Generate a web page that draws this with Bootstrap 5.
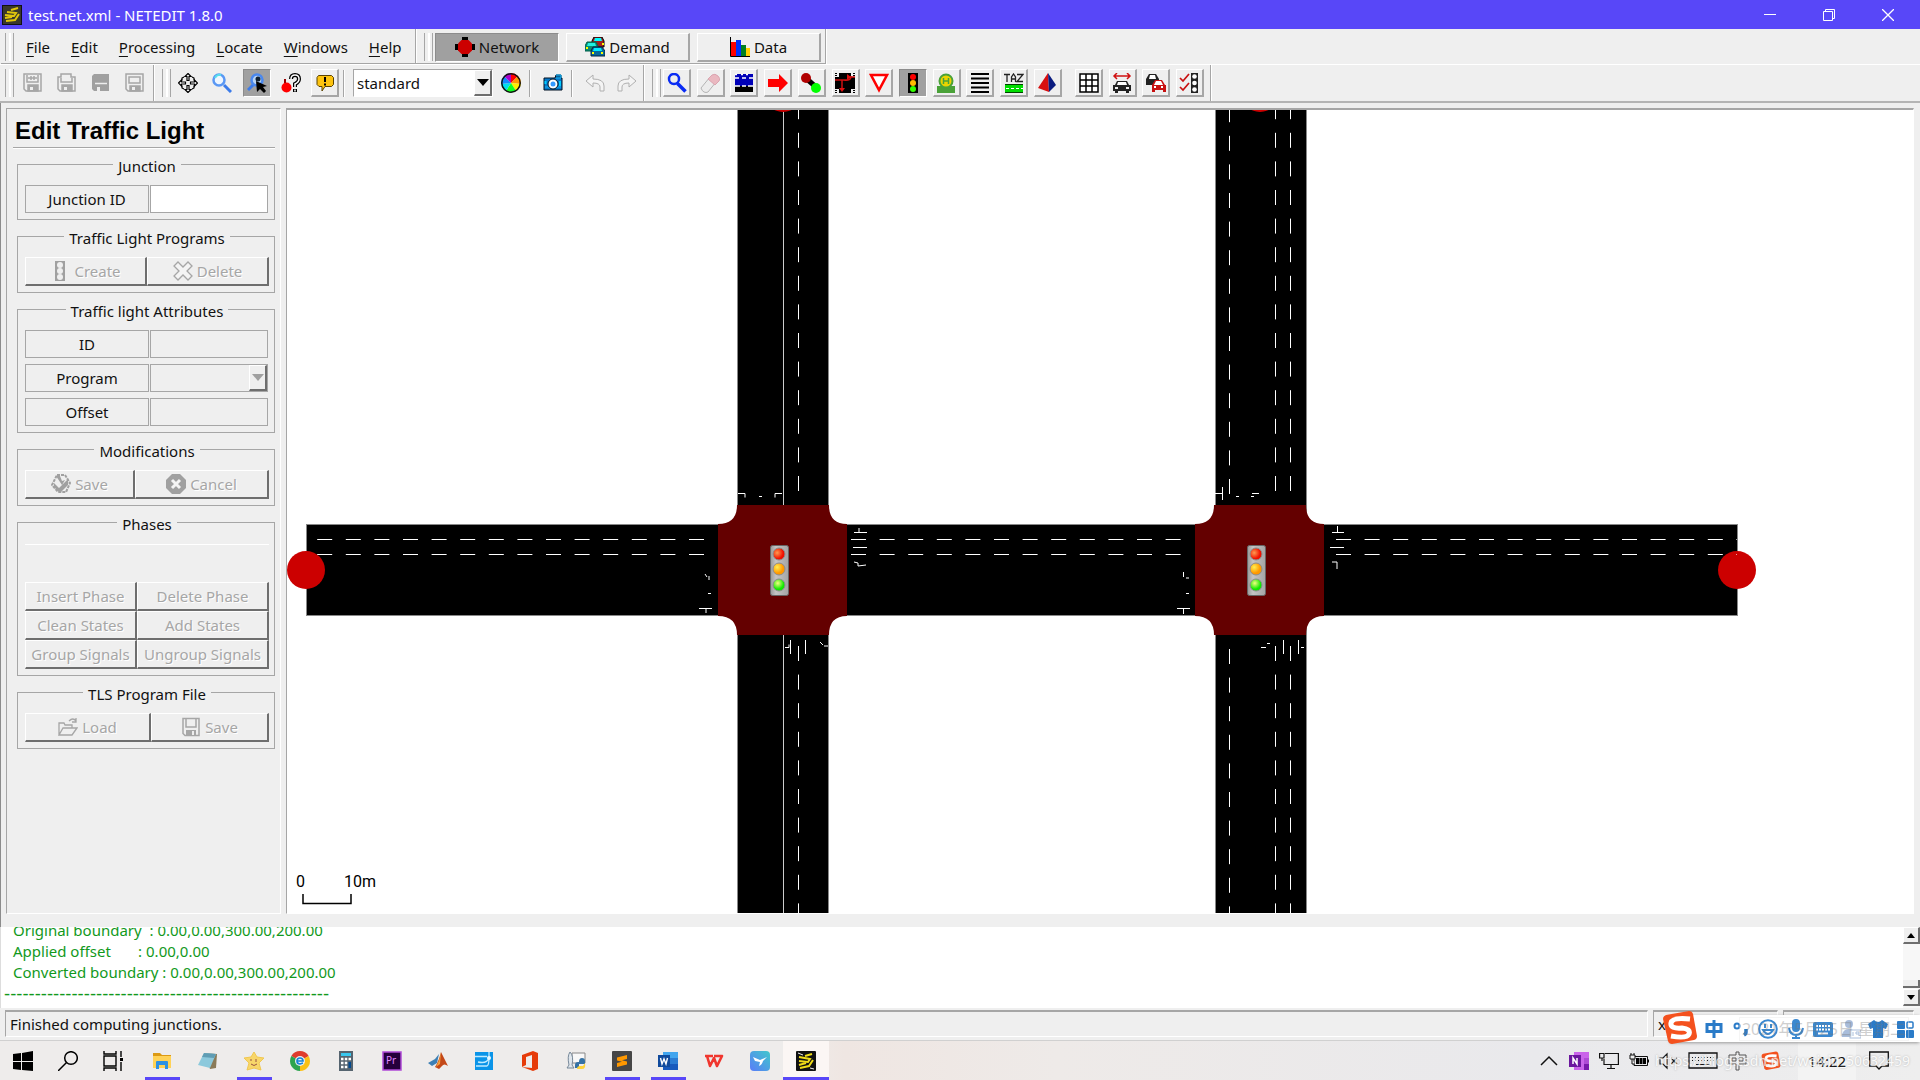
<!DOCTYPE html>
<html lang="en">
<head>
<meta charset="utf-8">
<meta name="viewport" content="width=device-width, initial-scale=1">
<title>test.net.xml - NETEDIT 1.8.0</title>
<link rel="stylesheet" href="https://cdn.jsdelivr.net/npm/bootstrap@5.3.0/dist/css/bootstrap.min.css">
<style>
:root{--face:#efefef;--dark:#a6a6a6;--deep:#6e6e6e;--accent:#5847f8}
body{height:100vh;background:var(--face);color:#111;font-family:"Noto Sans","Noto Sans CJK SC",sans-serif;font-size:15px;line-height:20px;overflow:hidden}
button,select,input{font:inherit;color:inherit;border-radius:0}
svg{display:block;flex:none}
.ic{width:20px;height:20px}
.titlebar{height:29px;background:var(--accent);color:#fff;padding:0 3px 0 2px}
.titlebar h1{font-size:15px;line-height:20px;font-weight:400;padding-left:2px}
.winbtn{width:59px;height:29px;background:none;border:0;padding:0;color:#fff}
.strip{height:36px;border-bottom:1px solid #fff;padding-left:1px}
.strip+.strip{height:38px;border-bottom:2px solid #b4b4b4}
.dock{height:100%;border-right:1px solid var(--dark);border-bottom:1px solid var(--dark);box-shadow:1px 0 #fff;padding:2px 0 0 4px}
.strip+.strip .dock{border-bottom:0;padding-top:0}
.grip{width:9px;height:28px;border:solid var(--dark);border-width:0 1px;position:relative;flex:none}
.grip::after{content:"";display:block;width:5px;height:28px;border-left:0;border-right:2px solid #fff}
.menus{gap:21px}
.modes{gap:7px;margin-left:2px}
.menuitem{color:#111;text-decoration:none}
.menuitem u{text-underline-offset:3px}
.mode{width:124px;height:29px;background:var(--face);border:1px solid #fff;border-right:2px solid var(--dark);border-bottom:2px solid var(--dark);padding:0}
.mode.on{background:#a0a0a0;border:1px solid #8c8c8c;border-right-color:#fff;border-bottom-color:#fff}
.tools-save{gap:6px;margin-left:5px}
.tools-view{width:165px;margin-left:3px}
.tools-edit{width:399px;margin-left:2px}
.tools-show{width:129px;margin-left:13px}
.tool{width:28px;height:28px;padding:0;border:1px solid transparent;background:var(--face);flex:none}
.tool.up{border-color:#fff var(--dark) var(--dark) #fff;border-right-width:2px;border-bottom-width:2px}
.tool.on{background:#a0a0a0;border-color:#8c8c8c #fff #fff #8c8c8c}
.rule{width:2px;height:27px;border-left:1px solid var(--dark);border-right:1px solid #fff;flex:none}
.combo{height:28px;border:1px solid var(--dark);border-right-color:#fff;border-bottom-color:#fff;background:#fff}
.combo select{appearance:none;border:0;background:transparent;padding:0 3px;outline:0;min-width:0}
.arrow{width:18px;background:var(--face);border:1px solid #fff;border-right:2px solid var(--deep);border-bottom:2px solid var(--deep)}
.work{padding:5px 6px 13px 5px;border-left:1px solid #8c8c8c;gap:5px;min-height:0}
.panel{width:275px;border:1px solid var(--dark);border-right:1px solid #fff;border-bottom:1px solid #fff;padding:5px 5px 0 6px;flex:none}
.panel h2{font:700 24px/28px "Liberation Sans",Arial,sans-serif;color:#000;margin:0 0 5px;padding:3px 0 2px 2px;border-bottom:1px solid var(--dark);box-shadow:0 1px #fff}
.grp{margin:0 0 5px 4px;border:1px solid var(--dark);padding:10px 5px 6px 7px}
.grp legend{float:none;width:auto;font-size:15px;line-height:18px;margin:0 auto;padding:4px 5px 0}
.cell{height:28px;border:1px solid var(--dark);width:124px}
.fieldbox{height:28px;border:1px solid var(--dark);width:118px;background:var(--face);padding:0 3px;min-width:0}
.stack{gap:6px}
.pair{gap:1px}
.pb{height:29px;background:var(--face);border:1px solid #fff;border-right:2px solid var(--deep);border-bottom:2px solid var(--deep);padding:0;color:#a6a6a6;text-shadow:1px 1px #fff;white-space:nowrap;flex:1 1 auto}
.pb:disabled{color:#a6a6a6}
.w1{width:122px;flex:none}.w2{width:110px;flex:none}.w3{width:126px;flex:none}
.phasegrid{display:grid;grid-template-columns:112px 1fr;margin-top:1px;padding-top:37px;border-top:1px solid #fff}
.view{border:1px solid var(--dark);border-top-width:2px;border-right-color:#fff;border-bottom-color:#fff;background:#fff;min-width:0;overflow:hidden}
.scalebar{font-family:Roboto,sans-serif;font-size:16px}
.logwrap{height:81px;border-left:1px solid #ddd;background:#fff;flex:none}
.log{color:#12991c;line-height:21px;padding:0 0 4px 12px;white-space:pre}
.log p{margin:0}
.log .dashes{font-family:"DejaVu Sans",sans-serif;font-size:17px;margin-left:-9px}
.vscroll{width:17px;background:#f7f7f7;flex:none;padding-bottom:2px}
.vscroll button{height:17px;padding:0;background:var(--face);border:1px solid #fff;border-right:2px solid var(--deep);border-bottom:2px solid var(--deep)}
.thumb{height:8px;margin-bottom:1px;background:var(--face);border-right:2px solid var(--deep);border-bottom:2px solid var(--deep)}
.status{height:33px;padding:2px 6px 3px 5px;gap:5px;border-bottom:1px solid #d0d0d0;position:relative;flex:none}
.sbox{border:1px solid var(--dark);border-top-width:2px;border-right-color:#fff;border-bottom-color:#fff;padding-left:4px}
.ime{position:absolute;right:0;top:7px;width:249px;height:27px;background:#fff;box-shadow:-1px 1px 3px #999;padding:0 1px 0 29px;z-index:2}
.ime button{width:27px;height:27px;padding:0;border:0;background:none;color:#2a7bc8}
.imelogo{position:absolute;left:-9px;top:-5px}
.tip{position:absolute;right:11px;top:2px;width:170px;height:24px;border:1px solid #e4e4e4;color:#777;opacity:.35;font-size:16px;line-height:22px;text-align:center;white-space:nowrap;pointer-events:none}
.taskbar{height:39px;background:linear-gradient(90deg,#eeeceb,#eeeceb 41%,#efe6e2 44%,#eeeae8 55%,#e9e9ec 80%,#eeeeee);position:relative;flex:none}
.taskbar button{border:0;padding:3px 0 0;background:none;height:39px;width:46px;border-bottom:3px solid transparent}
.taskbar .sys{width:45px}
.taskbar .run{background:linear-gradient(var(--accent),var(--accent)) center bottom/35px 3px no-repeat border-box}
.taskbar .cur{background:#fbf6f4;border-bottom-color:var(--accent)}
.taskbar .tray{width:30px}
.taskbar .wide{width:38px}
.taskbar .clock{width:58px;background:#f3f3f3}
.trayend{margin-right:18px}
.watermark{position:absolute;right:10px;top:10px;color:#fff;opacity:.75;font-size:14px;line-height:20px;text-shadow:0 0 2px #999;pointer-events:none}
</style>
<script src="https://cdn.jsdelivr.net/npm/bootstrap@5.3.0/dist/js/bootstrap.bundle.min.js"></script>
</head>
<body class="d-flex flex-column m-0">

<header class="titlebar d-flex align-items-center flex-shrink-0">
  <svg class="ic" viewBox="0 0 20 20"><rect width="20" height="20" fill="#111"/><rect x="1" y="1" width="18" height="18" fill="#39372c"/><path d="M9 5L16 3M5 7L14 8L12 11L3 10M4 16L13 15L17 9M3 13L10 12" stroke="#e2c60c" stroke-width="2" fill="none"/></svg>
  <h1 class="m-0 ms-1 me-auto">test.net.xml - NETEDIT 1.8.0</h1>
  <button class="winbtn d-flex align-items-center justify-content-center" aria-label="Minimize"><svg width="12" height="12"><path d="M0 5.500H12" stroke="#fff"/></svg></button>
  <button class="winbtn d-flex align-items-center justify-content-center" aria-label="Restore"><svg width="12" height="12" fill="none" stroke="#fff"><path d="M.5 2.500H9.500V11.500H.5ZM2.500 2.500V.5H11.500V9.500H9.500"/></svg></button>
  <button class="winbtn d-flex align-items-center justify-content-center" aria-label="Close"><svg width="12" height="12"><path d="M0 0L12 12M12 0L0 12" stroke="#fff" stroke-width="1.300"/></svg></button>
</header>

<div class="strip d-flex flex-shrink-0">
  <nav class="dock d-flex align-items-center" style="width:415px">
    <span class="grip"></span>
    <div class="menus d-flex ps-2 ms-1">
      <a class="menuitem" href="#"><u>F</u>ile</a><a class="menuitem" href="#"><u>E</u>dit</a><a class="menuitem" href="#"><u>P</u>rocessing</a><a class="menuitem" href="#"><u>L</u>ocate</a><a class="menuitem" href="#"><u>W</u>indows</a><a class="menuitem" href="#"><u>H</u>elp</a>
    </div>
  </nav>
  <div class="dock d-flex align-items-center pe-1">
    <span class="grip ms-1"></span>
    <div class="modes d-flex">
      <button class="mode on d-flex align-items-center justify-content-center gap-1"><svg class="ic" viewBox="0 0 20 20"><path d="M7 0h6v20H7zM0 7h20v6H0z"/><path d="M6.500 3h7L17 6.500v7L13.500 17h-7L3 13.500v-7z" fill="#c00"/></svg><span>Network</span></button>
      <button class="mode d-flex align-items-center justify-content-center gap-1"><svg class="ic" viewBox="0 0 20 20"><path d="M7 4l2-4h8l2 4v6H7z" fill="#a02020" stroke="#000"/><path d="M10 1h6l1 3H9z" fill="#0ff"/><path d="M0 9l2-4h9l2 4v5H0z" fill="#0a8a70" stroke="#00604c"/><path d="M3 6h7l1 3H2z" fill="#20f0e0"/><path d="M6 14l2-4h9l3 4v5H6z" fill="#086898" stroke="#024"/><path d="M9 11h7l1 3H8z" fill="#0ef"/><path d="M7 15h2v2H7zM16 15h2v2h-2zM1 10h2v2H1zM17 6h2v2h-2z" fill="#ff0"/></svg><span>Demand</span></button>
      <button class="mode d-flex align-items-center justify-content-center gap-1"><svg class="ic" viewBox="0 0 20 20"><path d="M.5 0V19.500H20" stroke="#000" fill="none"/><path d="M1 5h5v14H1z" fill="red"/><path d="M6 3h5v16H6z" fill="#0030ff"/><path d="M11 8h5v11h-5z" fill="#008020"/><path d="M16 11h4v8h-4z" fill="#ffd000"/></svg><span>Data</span></button>
    </div>
  </div>
</div>

<div class="strip d-flex flex-shrink-0">
  <div class="dock d-flex align-items-center" style="width:153px">
    <span class="grip"></span>
    <div class="tools-save d-flex">
      <button class="tool d-flex align-items-center justify-content-center" aria-label="Save network"><svg class="ic" viewBox="0 0 20 20" fill="none" stroke="#a6a6a6" stroke-width="1.500"><path d="M1 1h17v17H3l-2-2zM4 2v7h11V2M5 5h9M8 3v4M11 3v4"/><path d="M5 12h10v6H5z" fill="#a6a6a6"/><path d="M7 14h3v3H7z" fill="#eee" stroke="none"/></svg></button>
      <button class="tool d-flex align-items-center justify-content-center" aria-label="Save additionals"><svg class="ic" viewBox="0 0 20 20" fill="none" stroke="#a6a6a6" stroke-width="1.500"><path d="M1 4h3V1h10v3h4v14H3l-2-2zM4 5v4h11V5"/><path d="M5 12h10v6H5z" fill="#a6a6a6"/><path d="M7 14h3v3H7z" fill="#eee" stroke="none"/></svg></button>
      <button class="tool d-flex align-items-center justify-content-center" aria-label="Save demand"><svg class="ic" viewBox="0 0 20 20"><path d="M1 3l2-2h15v17H3l-2-2z" fill="#a0a0a0"/><path d="M4 10.500h12" stroke="#eee" stroke-width="1.500"/><path d="M6 14h3v4H6z" fill="#eee"/></svg></button>
      <button class="tool d-flex align-items-center justify-content-center" aria-label="Save data"><svg class="ic" viewBox="0 0 20 20" fill="none" stroke="#a6a6a6" stroke-width="1.500"><path d="M1 1h17v17H3l-2-2zM4 4h11v6H4z"/><path d="M5 13h10v5H5z" fill="#a6a6a6"/><path d="M7 14h3v3H7z" fill="#eee" stroke="none"/></svg></button>
    </div>
  </div>
  <div class="dock d-flex align-items-center" style="width:490px">
    <span class="grip ms-1"></span>
    <div class="tools-view d-flex justify-content-between">
      <button class="tool d-flex align-items-center justify-content-center" aria-label="Recenter view"><svg class="ic" viewBox="0 0 20 20" fill="#fff" stroke="#000" stroke-width="1.200"><path id="mv" d="M10 .5l3 3h-2v4H9v-4H7z"/><use href="#mv" transform="rotate(90 10 10)"/><use href="#mv" transform="rotate(180 10 10)"/><use href="#mv" transform="rotate(270 10 10)"/><path d="M4 7.500V5l2-1M16 7.500V5l-2-1M4 12.500V15l2 1M16 12.500V15l-2 1" fill="none"/></svg></button>
      <button class="tool d-flex align-items-center justify-content-center" aria-label="Zoom"><svg class="ic" viewBox="0 0 20 20"><path d="M12 12l7 7" stroke="#3b7bea" stroke-width="3"/><circle cx="7" cy="7" r="5.500" fill="#eef6ff" stroke="#5a98f4" stroke-width="2.500"/><path d="M3 5a5 5 0 0 1 6-3" stroke="#58e0ec" stroke-width="2" fill="none"/></svg></button>
      <button class="tool on d-flex align-items-center justify-content-center" aria-label="Zoom style"><svg class="ic" viewBox="0 0 20 20"><path d="M7 11l-6 6" stroke="#3b7bea" stroke-width="3"/><circle cx="10" cy="7" r="5.500" fill="#b8d4f4" stroke="#4a88ee" stroke-width="2.500"/><circle cx="11" cy="6" r="2.500" fill="#123"/><path d="M9 8l11 5-4 1 3 4-2 2-4-4-3 3z" fill="#000"/></svg></button>
      <button class="tool d-flex align-items-center justify-content-center" aria-label="Locate junction"><svg class="ic" viewBox="0 0 20 20"><circle cx="5.500" cy="14.500" r="5" fill="red"/><path d="M4 10V6" stroke="#900" stroke-width="2"/><path d="M10 6q0-4 4-4t4 4q0 3-4 5v3M14 16v3" fill="none" stroke="#000" stroke-width="4"/><path d="M10 6q0-4 4-4t4 4q0 3-4 5v3M14 16.500v2" fill="none" stroke="#fff" stroke-width="1.500"/></svg></button>
      <button class="tool up d-flex align-items-center justify-content-center" aria-label="Messages"><svg class="ic" viewBox="0 0 20 20"><path d="M3.500 2.500h13l2 2v7l-2 2H10l-3 4.500v-4.500H4l-2-2v-7z" fill="#fdc30f" stroke="#5a4200"/><path d="M10 4v5M10 10.500v2" stroke="#000" stroke-width="2"/></svg></button>
    </div>
    <span class="rule mx-1"></span>
    <div class="combo d-flex ms-1 bg-white" style="width:140px"><select class="flex-grow-1" aria-label="View scheme"><option>standard</option></select><span class="arrow d-flex align-items-center justify-content-center"><svg width="12" height="7"><path d="M0 0h12L6 7z"/></svg></span></div>
    <button class="tool d-flex align-items-center justify-content-center ms-1" aria-label="Colours"><svg class="ic" viewBox="0 0 20 20"><g stroke="none"><path d="M10 10V0a10 10 0 0 1 7 3z" fill="#f00"/><path d="M10 10l7-7a10 10 0 0 1 3 8z" fill="#f90"/><path d="M10 10l10 1a10 10 0 0 1-5 7z" fill="#fe0"/><path d="M10 10l5 8a10 10 0 0 1-10 0z" fill="#1f2"/><path d="M10 10l-5 8a10 10 0 0 1-5-7z" fill="#0de"/><path d="M10 10L0 11a10 10 0 0 1 3-8z" fill="#18f"/><path d="M10 10L3 3a10 10 0 0 1 7-3z" fill="#a0c"/></g><circle cx="10" cy="10" r="9.200" fill="none" stroke="#111" stroke-width="1.500"/></svg></button>
    <span class="rule mx-1"></span>
    <button class="tool d-flex align-items-center justify-content-center ms-1" aria-label="Snapshot"><svg class="ic" viewBox="0 0 20 20"><path d="M1 5h11l1-3h5v3h1v12H1z" fill="#0878c8" stroke="#012"/><path d="M13 2h5v3h-5M2 14h16" stroke="#13b3f4" fill="#086098"/><circle cx="10" cy="11" r="5" fill="#fff" stroke="#012"/><circle cx="10" cy="11" r="2.500" fill="#39f"/><path d="M2.500 8v3M17 8v5" stroke="#0cf" stroke-width="2"/></svg></button>
    <span class="rule mx-1"></span>
    <button class="tool d-flex align-items-center justify-content-center ms-1" aria-label="Undo"><svg class="ic" viewBox="0 0 20 20" fill="#f4f4f4" stroke="#b0b0b0"><path d="M1 8l7-6v4q11 0 11 7v5h-4v-4q0-4-7-4v4z"/></svg></button>
    <button class="tool d-flex align-items-center justify-content-center ms-1" aria-label="Redo"><svg class="ic" viewBox="0 0 20 20" fill="#f4f4f4" stroke="#b0b0b0"><path d="M19 8l-7-6v4Q1 6 1 13v5h4v-4q0-4 7-4v4z"/></svg></button>
  </div>
  <div class="dock d-flex align-items-center" style="width:567px">
    <span class="grip ms-1"></span>
    <div class="tools-edit d-flex justify-content-between">
      <button class="tool up d-flex align-items-center justify-content-center" aria-label="Inspect"><svg class="ic" viewBox="0 0 20 20" fill="none" stroke="#0a2cf4"><circle cx="7" cy="6" r="5" stroke-width="2.500"/><path d="M10.500 10.500l8 8" stroke-width="3.500"/></svg></button>
      <button class="tool up d-flex align-items-center justify-content-center" aria-label="Delete"><svg class="ic" viewBox="0 0 20 20"><path d="M1 15L10 4l6 5-8 10q-2 1-4 0t-3-4z" fill="#ececec" stroke="#b4b4b4"/><path d="M8 6l4-4q3-2 6 1t1 5l-4 4z" fill="#eab8c0" stroke="#daa4b0"/></svg></button>
      <button class="tool up d-flex align-items-center justify-content-center" aria-label="Edge"><svg class="ic" viewBox="0 0 20 20"><path d="M1 1h18v12H1z" fill="#0000b8"/><path d="M1 13h18v6H1z"/><path d="M1 1.500h2M7 1.500h2M12 1.500h2M1 5h4M8 5h4M15 5h4M1 13h5M8 13h4M14 13h5" stroke="#fff" stroke-width="1.500"/></svg></button>
      <button class="tool up d-flex align-items-center justify-content-center" aria-label="Move"><svg class="ic" viewBox="0 0 20 20"><path d="M0 6h11V1l9 9-9 9v-5H0z" fill="red"/></svg></button>
      <button class="tool up d-flex align-items-center justify-content-center" aria-label="Connect"><svg class="ic" viewBox="0 0 20 20"><path d="M7 7l8 7" stroke="#000" stroke-width="5"/><circle cx="5" cy="5" r="5" fill="#b00000"/><circle cx="15" cy="15" r="5" fill="#0f0"/></svg></button>
      <button class="tool up d-flex align-items-center justify-content-center" aria-label="Connection"><svg class="ic" viewBox="0 0 20 20"><path d="M4 0h12v20H4zM0 4h20v12H0z"/><path d="M1 0v3M19 0v3M1 17v3M19 17v3" stroke="#000" stroke-width="2" stroke-dasharray="1 1"/><path d="M7 17V7H0M7 7h6M9 7q7 1 7-4M12 4h8" stroke="#d01010" stroke-width="1.500" fill="none"/><path d="M4 15h6l-3 4zM12 1l4 3-4 3z" fill="#e01010"/></svg></button>
      <button class="tool up d-flex align-items-center justify-content-center" aria-label="Prohibition"><svg class="ic" viewBox="0 0 20 20"><path d="M2 2h16l-8 15z" fill="#fff" stroke="red" stroke-width="2.500"/></svg></button>
      <button class="tool on d-flex align-items-center justify-content-center" aria-label="Traffic light"><svg class="ic" viewBox="0 0 20 20"><path d="M5 0h10v20H5z"/><circle cx="10" cy="4" r="3" fill="red"/><circle cx="10" cy="10" r="3" fill="#fb0"/><circle cx="10" cy="16" r="3" fill="#3f0"/></svg></button>
      <button class="tool up d-flex align-items-center justify-content-center" aria-label="Additional"><svg class="ic" viewBox="0 0 20 20"><path d="M1 13h18v7H1z" fill="#4aa238"/><circle cx="10" cy="8" r="6.500" fill="#ecd400" stroke="#4aa238" stroke-width="2"/><path d="M7.500 5v6M12.500 5v6M7.500 8h5" stroke="#4aa238" stroke-width="1.500"/></svg></button>
      <button class="tool up d-flex align-items-center justify-content-center" aria-label="Crossing"><svg class="ic" viewBox="0 0 20 20"><path d="M1 1h18M1 5.500h18M1 10h18M1 14.500h18M1 19h18" stroke="#000" stroke-width="2"/></svg></button>
      <button class="tool up d-flex align-items-center justify-content-center" aria-label="TAZ"><svg class="ic" viewBox="0 0 20 20"><path d="M0 1.500h6M3 1v8M7.500 9V4l2-3 2 3v5M7 6h4M13 1.500h6l-6 7h6" stroke="#222" stroke-width="1.300" fill="none"/><path d="M1 11h18v9H1z" fill="#0d0"/><path d="M1 11.500h18M1 19.500h18" stroke="#040"/><path d="M2 15.500h17" stroke="#fff" stroke-dasharray="3 2"/></svg></button>
      <button class="tool up d-flex align-items-center justify-content-center" aria-label="Polygon"><svg class="ic" viewBox="0 0 20 20"><path d="M11 0L1 15l11 4z" fill="#d81010"/><path d="M11 0l8 12-7 7z" fill="#0a1c80"/></svg></button>
    </div>
    <div class="tools-show d-flex justify-content-between">
      <button class="tool up d-flex align-items-center justify-content-center" aria-label="Grid"><svg class="ic" viewBox="0 0 20 20"><path d="M1 1h18v18H1zM7 1v18M13 1v18M1 7h18M1 13h18" fill="#fff" stroke="#000" stroke-width="1.500"/></svg></button>
      <button class="tool up d-flex align-items-center justify-content-center" aria-label="Spread vehicles"><svg class="ic" viewBox="0 0 20 20"><path d="M2 3h16M5 0L2 3l3 3M15 0l3 3-3 3" stroke="#d01010" stroke-width="1.500" fill="none"/><path d="M1 12h2l2-4h10l2 4h2v6h-2v2h-3v-2H6v2H3v-2H1z" fill="#222"/><path d="M6 9h8l1 3H5z" fill="#fff"/><path d="M3 14h3v2H3zM14 14h3v2h-3z" fill="#eee"/></svg></button>
      <button class="tool up d-flex align-items-center justify-content-center" aria-label="Show demand"><svg class="ic" viewBox="0 0 20 20"><path d="M0 6l3-5h7l3 5v6H0z" fill="#222"/><path d="M4 2h5l1 4H3z" fill="#fff"/><path d="M6 12l3-5h7l3 5h1v7h-3v-2H9v2H6z" fill="#c81010"/><path d="M10 8h5l2 4H8z" fill="#fff"/><path d="M8 14h2M15 14h2" stroke="#fff" stroke-width="2"/></svg></button>
      <button class="tool up d-flex align-items-center justify-content-center" aria-label="Check phases"><svg class="ic" viewBox="0 0 20 20"><path d="M1 5l3 3 6-7M1 14l3 3 6-7" stroke="#c81010" stroke-width="1.700" fill="none"/><path d="M12 0h7v20h-7z" fill="#222"/><g fill="#fff"><circle cx="15.500" cy="3.500" r="2.300"/><circle cx="15.500" cy="10" r="2.300"/><circle cx="15.500" cy="16.500" r="2.300"/></g></svg></button>
    </div>
  </div>
</div>

<main class="work d-flex flex-grow-1">
  <aside class="panel">
    <h2>Edit Traffic Light</h2>
    <fieldset class="grp"><legend>Junction</legend>
      <div class="d-flex pair"><label class="cell d-flex align-items-center justify-content-center" for="jid">Junction ID</label><input class="fieldbox bg-white" id="jid" type="text"></div>
    </fieldset>
    <fieldset class="grp"><legend>Traffic Light Programs</legend>
      <div class="d-flex">
        <button class="pb w1 d-flex align-items-center justify-content-center gap-1" disabled><svg class="ic" viewBox="0 0 20 20"><path d="M5 0h10v20H5z" fill="#a0a0a0"/><g fill="#efefef"><circle cx="10" cy="4" r="3"/><circle cx="10" cy="10" r="3"/><circle cx="10" cy="16" r="3"/></g></svg>Create</button>
        <button class="pb d-flex align-items-center justify-content-center gap-1" disabled><svg class="ic" viewBox="0 0 20 20" fill="#f4f4f4" stroke="#a6a6a6" stroke-width="1.300"><path d="M5 1l5 5 5-5 4 4-5 5 5 5-4 4-5-5-5 5-4-4 5-5-5-5z"/></svg>Delete</button>
      </div>
    </fieldset>
    <fieldset class="grp"><legend>Traffic light Attributes</legend>
      <div class="d-flex flex-column stack">
        <div class="d-flex pair"><label class="cell d-flex align-items-center justify-content-center" for="tid">ID</label><input class="fieldbox" id="tid" type="text" disabled></div>
        <div class="d-flex pair"><label class="cell d-flex align-items-center justify-content-center" for="tprog">Program</label><div class="fieldbox combo d-flex p-0"><select class="flex-grow-1" id="tprog" disabled><option></option></select><span class="arrow d-flex align-items-center justify-content-center"><svg width="12" height="7"><path d="M0 0h12L6 7z" fill="#a0a0a0"/></svg></span></div></div>
        <div class="d-flex pair"><label class="cell d-flex align-items-center justify-content-center" for="toff">Offset</label><input class="fieldbox" id="toff" type="text" disabled></div>
      </div>
    </fieldset>
    <fieldset class="grp"><legend>Modifications</legend>
      <div class="d-flex">
        <button class="pb w2 d-flex align-items-center justify-content-center gap-1" disabled><svg class="ic" viewBox="0 0 20 20"><path d="M6 1h8l5 8-4 9H7l-6-7z" fill="none" stroke="#a0a0a0" stroke-width="2" stroke-dasharray="3 1"/><path d="M5 2h4l2 5 3-1-3 5zM3 9l5 5 9-9v6l-8 8-6-6z" fill="#a0a0a0"/></svg>Save</button>
        <button class="pb d-flex align-items-center justify-content-center gap-1" disabled><svg class="ic" viewBox="0 0 20 20"><path d="M6 0h8l6 6v8l-6 6H6l-6-6V6z" fill="#a0a0a0"/><path d="M6 6l8 8M14 6l-8 8" stroke="#f4f4f4" stroke-width="3"/></svg>Cancel</button>
      </div>
    </fieldset>
    <fieldset class="grp"><legend>Phases</legend>
      <div class="phasegrid">
        <button class="pb" disabled>Insert Phase</button><button class="pb" disabled>Delete Phase</button>
        <button class="pb" disabled>Clean States</button><button class="pb" disabled>Add States</button>
        <button class="pb" disabled>Group Signals</button><button class="pb" disabled>Ungroup Signals</button>
      </div>
    </fieldset>
    <fieldset class="grp"><legend>TLS Program File</legend>
      <div class="d-flex">
        <button class="pb w3 d-flex align-items-center justify-content-center gap-1" disabled><svg class="ic" viewBox="0 0 20 20" fill="none" stroke="#a6a6a6" stroke-width="1.300"><path d="M1 18V6h5l1 2h7v3M1 18l4-7h14l-5 7zM11 4q4-4 7 0M18 1v4h-4"/></svg>Load</button>
        <button class="pb d-flex align-items-center justify-content-center gap-1" disabled><svg class="ic" viewBox="0 0 20 20"><path d="M2 1.500h16v17H4l-2-2zM5 2v8h10V2" fill="none" stroke="#a6a6a6" stroke-width="1.500"/><path d="M5 13h10v6H5z" fill="#a6a6a6"/><path d="M11 14h2v4h-2z" fill="#eee"/></svg>Save</button>
      </div>
    </fieldset>
  </aside>

  <section class="view flex-grow-1" aria-label="Network view">
    <svg width="100%" height="100%">
      <defs>
        <path id="junction" d="M737 505H829Q829 524 847 524V616Q829 616 829 635H737Q737 616 718 616V524Q737 524 737 505Z" fill="#640000"/>
        <linearGradient id="case"><stop offset="0" stop-color="#999"/><stop offset=".3" stop-color="#c4c4c4"/><stop offset="1" stop-color="#a4a4a4"/></linearGradient>
        <radialGradient id="lr" cx=".35" cy=".4"><stop offset="0" stop-color="#ff9a50"/><stop offset="1" stop-color="#f01000"/></radialGradient>
        <radialGradient id="ly" cx=".35" cy=".35"><stop offset="0" stop-color="#ffef50"/><stop offset="1" stop-color="#ff9800"/></radialGradient>
        <radialGradient id="lg" cx=".4" cy=".35"><stop offset="0" stop-color="#f2ff80"/><stop offset="1" stop-color="#10e800"/></radialGradient>
        <g id="signal"><rect x="770.500" y="545.500" width="18" height="50" rx="2" fill="url(#case)" stroke="#666"/><g stroke="#8c8c8c"><circle cx="779" cy="554" r="6" fill="url(#lr)"/><circle cx="779" cy="569" r="6" fill="url(#ly)"/><circle cx="779" cy="585" r="6" fill="url(#lg)"/></g></g>
      </defs>
      <g transform="translate(-287 -110)">
        <g stroke="#888"><rect x="737.500" y="90.500" width="91" height="900"/><rect x="1215.500" y="90.500" width="91" height="900"/><rect x="306.500" y="524.500" width="1431" height="91"/></g>
        <g fill="#c00"><circle cx="306" cy="570" r="19"/><circle cx="1737" cy="570" r="19"/><circle cx="783" cy="93" r="19"/><circle cx="1260" cy="93" r="19"/></g>
        <g stroke="#ddd" fill="none">
          <path d="M783.500 112V505M783.500 635V920" stroke="#ccc"/>
          <g stroke-dasharray="15 13.600" stroke="#fff">
            <path d="M704 539.500H310M704 554.500H310M851 539.500H1183M851 554.500H1183M1336 539.500H1737M1336 554.500H1737"/>
            <path d="M798.500 491V110M1229.500 494V110M1275.500 491V110M1290.500 491V110M798.500 646V920M1229.500 649V920M1275.500 646V920M1290.500 646V920"/>
          </g>
          <g stroke="#fff">
            <path d="M738 493.500h7v4M782 493.500h-7v4M759 496.500h3M854 532.500h13M859 528v4M853 547.500h14M854 562l4 1v3l8-1M705 574l2 3M709 576v4M708 593.500h3M699 608.500h13M706 609v4M785 647.500h4v-3M790.500 640v14M805.500 640v14M820 642l3 3M824 646h4"/>
            <path d="M1222.500 487v13M1215 493.500h7M1236 496.500h3M1251 496.500h3M1252 493.500h7M1332 532.500h12M1337.500 526v6M1330 547.500h14M1332 562h5v7M1183.500 572v5M1186 578h3M1186 593.500h3M1177 608.500h13M1183.500 609v5M1261 647.500h5M1267 643.500h3M1283.500 640v14M1298.500 640v14M1301 647.500h3"/>
          </g>
        </g>
        <use href="#junction"/><use href="#junction" x="477"/>
        <use href="#signal"/><use href="#signal" x="477"/>
        <path d="M303 894v9.500h48V894" fill="none" stroke="#000" stroke-width="1.500"/>
        <g class="scalebar"><text x="296" y="887">0</text><text x="344" y="887">10m</text></g>
      </g>
    </svg>
  </section>
</main>

<section class="logwrap d-flex">
  <div class="log flex-grow-1 d-flex flex-column justify-content-end overflow-hidden"><p>Original boundary  : 0.00,0.00,300.00,200.00</p><p>Applied offset       : 0.00,0.00</p><p>Converted boundary : 0.00,0.00,300.00,200.00</p><p class="dashes">-----------------------------------------------------</p></div>
  <div class="vscroll d-flex flex-column">
    <button class="d-flex align-items-center justify-content-center" aria-label="Scroll up"><svg width="8" height="5"><path d="M0 5h8L4 0z"/></svg></button>
    <div class="flex-grow-1"></div><div class="thumb"></div>
    <button class="d-flex align-items-center justify-content-center" aria-label="Scroll down"><svg width="8" height="5"><path d="M0 0h8L4 5z"/></svg></button>
  </div>
</section>

<footer class="status d-flex">
  <div class="sbox flex-grow-1 d-flex align-items-center">Finished computing junctions.</div>
  <div class="sbox d-flex align-items-center" style="width:125px">x</div>
  <div class="sbox" style="width:131px"></div>
  <div class="ime d-flex align-items-center justify-content-between">
    <svg class="imelogo" width="36" height="36" viewBox="0 0 36 36"><path d="M4 5L27 1q3 0 4 3l4 22q0 3-3 4L10 34q-3 0-4-3L1 9q0-3 3-4z" fill="#f4511e"/><path d="M28 9Q10 7 9 13t11 5q9 1 7 6T9 26" fill="none" stroke="#fff" stroke-width="5"/></svg>
    <button aria-label="Chinese mode"><svg class="ic mx-auto" viewBox="0 0 20 20" fill="none" stroke="#2a7bc8" stroke-width="3"><path d="M3 5.500h14v7H3zM10 1v18"/></svg></button>
    <button aria-label="Punctuation"><svg class="ic mx-auto" viewBox="0 0 20 20" fill="none" stroke="#2a7bc8" stroke-width="2"><circle cx="6" cy="7" r="2.500"/><path d="M15 10v3q0 2-2 3" stroke-width="3.500"/></svg></button>
    <button aria-label="Emoji"><svg class="ic mx-auto" viewBox="0 0 20 20" fill="none" stroke="#3a88d0" stroke-width="2"><circle cx="10" cy="10" r="8.800"/><path d="M7 5v4M13 5v4M5 11q5 8 10 0z"/></svg></button>
    <button aria-label="Voice"><svg class="ic mx-auto" viewBox="0 0 20 20" fill="none" stroke="#3a88d0" stroke-width="2"><rect x="7" y="1" width="6" height="11" rx="3" fill="#3a88d0"/><path d="M3 9q1 7 7 7t7-7M10 16v3M6 19h8"/></svg></button>
    <button aria-label="Keyboard"><svg class="ic mx-auto" viewBox="0 0 20 20"><rect x="0" y="3" width="20" height="15" rx="2" fill="#3a88d0"/><path d="M3 7h15M3 10.500h15" stroke="#fff" stroke-width="2" stroke-dasharray="2 1"/><path d="M5 14.500h10" stroke="#fff" stroke-width="2"/></svg></button>
    <button aria-label="Account"><svg class="ic mx-auto" viewBox="0 0 20 20" fill="#a9bddb"><circle cx="8" cy="5" r="4"/><path d="M1 18q0-8 7-8t7 8z"/><rect x="9" y="11" width="11" height="8" fill="#fff" stroke="#a9bddb"/><path d="M12 13v4M15 13h3v4M15 13v2h3" stroke="#a9bddb" fill="none"/></svg></button>
    <button aria-label="Skin"><svg class="ic mx-auto" viewBox="0 0 20 20"><path d="M6 1q4 4 8 0l6 4-2 5-3-1v10H5V9l-3 1-2-5z" fill="#2a7bc8"/></svg></button>
    <button aria-label="Toolbox"><svg class="ic mx-auto" viewBox="0 0 20 20" fill="#2a7bc8"><rect x="2" y="2" width="8" height="8" rx="1"/><rect x="2" y="11" width="8" height="8" rx="1"/><rect x="11" y="11" width="8" height="8" rx="1"/><rect x="12" y="3" width="6" height="6" rx="1" fill="none" stroke="#2a7bc8" stroke-width="1.500"/></svg></button>
    <span class="tip">2021年5月25日 星期二</span>
  </div>
</footer>

<div class="taskbar d-flex">
  <button class="sys d-flex align-items-center justify-content-center" aria-label="Start"><svg class="ic" viewBox="0 0 20 20"><path d="M0 3l8-1v8H0zM9 2l11-2v10H9zM0 11h8v8l-8-1zM9 11h11v9L9 19z"/></svg></button>
  <button class="sys d-flex align-items-center justify-content-center" aria-label="Search"><svg class="ic" viewBox="0 0 20 20" fill="none" stroke="#000" stroke-width="1.500"><circle cx="13" cy="7" r="6.300"/><path d="M8.500 11.500L0 20"/></svg></button>
  <button class="sys d-flex align-items-center justify-content-center me-1" aria-label="Task view"><svg class="ic" viewBox="0 0 20 20" fill="none" stroke="#000" stroke-width="1.400"><path d="M1 0v3h12V0M1 5h12v10H1zM1 20v-3h12v3M18 0v6M18 11v9"/><path d="M17 7h3v3h-3z" fill="#000" stroke="none"/></svg></button>
  <button class="run d-flex align-items-center justify-content-center" aria-label="Explorer"><svg class="ic" viewBox="0 0 20 20"><path d="M1 2h7l2 2h9v12H1z" fill="#dc9a14"/><path d="M1 5h18v12H1z" fill="#ffd257"/><path d="M4 18v-7q0-1 1-1h10q1 0 1 1v7h-3v-4H7v4z" fill="#2d91e4"/></svg></button>
  <button class="d-flex align-items-center justify-content-center" aria-label="Notepad"><svg class="ic" viewBox="0 0 20 20"><path d="M6 2l13 1-1 14-6 1z" fill="#8a7a58"/><path d="M6 2l12 1-6 14L0 14z" fill="#8cc9dc"/><path d="M6 2l12 1-2 4L4 6z" fill="#5f9db4"/></svg></button>
  <button class="run d-flex align-items-center justify-content-center" aria-label="Star"><svg class="ic" viewBox="0 0 20 20"><path d="M10 1l3 5 7 1-5 5 2 7-7-2-7 2 2-7-5-5 7-1z" fill="#f8d66a" stroke="#f0c850"/><path d="M6 9h2M12 8v3M7 13q3 3 6 0" stroke="#954" fill="none"/></svg></button>
  <button class="d-flex align-items-center justify-content-center" aria-label="Chrome"><svg class="ic" viewBox="0 0 20 20"><path d="M10 10L1.340 5A10 10 0 0 1 18.660 5z" fill="#e03b2c"/><path d="M10 10L18.660 5A10 10 0 0 1 10 20z" fill="#fbc116"/><path d="M10 10v10A10 10 0 0 1 1.340 5z" fill="#2da44e"/><circle cx="10" cy="10" r="5" fill="#eee"/><path d="M7 10h6q0-3-3-3t-3 3 3 3l3-1" stroke="#1684d8" stroke-width="1.700" fill="none"/></svg></button>
  <button class="d-flex align-items-center justify-content-center" aria-label="Calculator"><svg class="ic" viewBox="0 0 20 20"><path d="M3 0h14v20H3z" fill="#56646f"/><path d="M5 2h10v3H5z" fill="#38c8f0"/><path d="M5 8h2.500M8.800 8h2.500M12.500 8H15M5 12h2.500M8.800 12h2.500M5 16h2.500M8.800 16h2.500" stroke="#fff" stroke-width="2.500"/><path d="M12.500 11H15v6h-2.500z" fill="#024a90"/></svg></button>
  <button class="d-flex align-items-center justify-content-center" aria-label="Premiere"><svg class="ic" viewBox="0 0 20 20"><rect x="1" y="1" width="18" height="18" fill="#25003c" stroke="#b04ad8" stroke-width="1.500"/><text x="4" y="13" font-size="10" fill="#e089ff">Pr</text></svg></button>
  <button class="d-flex align-items-center justify-content-center" aria-label="MATLAB"><svg class="ic" viewBox="0 0 20 20"><path d="M0 12l7-4 4-5-2 9-5 3z" fill="#3d80b5"/><path d="M7 16q4-6 6-15 3 6 7 14-4-3-6 0l-3 3z" fill="#c44818"/><path d="M13 1l-1 12-4 3q4-7 5-15z" fill="#f3a03a"/></svg></button>
  <button class="d-flex align-items-center justify-content-center" aria-label="CAD tool"><svg class="ic" viewBox="0 0 20 20"><path d="M1 1h18v18H1z" fill="#0a94e8"/><path d="M1 5.500h12M4 11q9 2 11-4M2 15h11q2-1 2-8V1" stroke="#bfeaff" stroke-width="1.300" fill="none"/><circle cx="15" cy="7" r="2" fill="#e8f8ff"/></svg></button>
  <button class="d-flex align-items-center justify-content-center" aria-label="Office"><svg class="ic" viewBox="0 0 20 20"><path d="M2 4l11-4 5 2v16l-5 2L2 16l10 1V4L6 6v8l-4 2z" fill="#e63b09"/></svg></button>
  <button class="d-flex align-items-center justify-content-center" aria-label="Python IDE"><svg class="ic" viewBox="0 0 20 20"><path d="M6 2h13v10H6z" fill="#f8f8f8" stroke="#888"/><path d="M4 1q4 4 2 13l2 3H1l2-3Q1 5 4 1z" fill="#dfe6ec" stroke="#789"/><path d="M9 14q0-3 3-3h1q0-4 3-4t3 3v3h-6v4H9z" fill="#3572a5"/><path d="M19 12q1 6-3 6h-5q0-3 3-3h3z" fill="#ffd43b"/></svg></button>
  <button class="run d-flex align-items-center justify-content-center" aria-label="Sublime Text"><svg class="ic" viewBox="0 0 20 20"><rect width="20" height="20" rx="1" fill="#464646"/><path d="M5 6.500l10-2.500v4l-5 1.300 5 1.200v3L5 16v-4l5-1.300L5 9.500z" fill="#ff9800"/></svg></button>
  <button class="run d-flex align-items-center justify-content-center" aria-label="Word"><svg class="ic" viewBox="0 0 20 20"><path d="M5 1h15v6H5z" fill="#41a5ee"/><path d="M5 7h15v6H5z" fill="#2b7cd3"/><path d="M5 13h15v6H5z" fill="#185abd"/><path d="M0 4h12v12H0z" fill="#104a9c"/><path d="M2.500 7l1.500 6 2-5 2 5 1.500-6" stroke="#fff" stroke-width="1.400" fill="none"/></svg></button>
  <button class="d-flex align-items-center justify-content-center" aria-label="WPS"><svg class="ic" viewBox="0 0 20 20"><path d="M1 5h8M3 5l3 10 4-8 3 8 5-10h-8" fill="none" stroke="#f0362e" stroke-width="2.600" stroke-linejoin="round"/></svg></button>
  <button class="d-flex align-items-center justify-content-center" aria-label="Messenger"><svg class="ic" viewBox="0 0 20 20"><defs><linearGradient id="bird" x1="0" y1="1" x2="1" y2="0"><stop offset="0" stop-color="#5a7cf8"/><stop offset="1" stop-color="#40c8cc"/></linearGradient></defs><rect width="20" height="20" rx="4" fill="url(#bird)"/><path d="M3 6l7 3 7-3-4 4q-1 4-4 5l1-4-5-1z" fill="#fff"/></svg></button>
  <button class="cur d-flex align-items-center justify-content-center" aria-label="NETEDIT"><svg class="ic" viewBox="0 0 20 20"><rect width="20" height="20" rx="1" fill="#111"/><path d="M9 5L16 3M3 6L14 8L12 11L3 10M4 17L13 15L17 9M3 14L10 12" stroke="#f0dc18" stroke-width="2" fill="none"/><path d="M2 2l5 2M14 17l4 1" stroke="#eee"/></svg></button>

  <div class="trayend d-flex ms-auto">
    <button class="tray d-flex align-items-center justify-content-center" aria-label="Hidden icons"><svg class="ic" viewBox="0 0 20 20"><path d="M2 14l8-8 8 8" fill="none" stroke="#111" stroke-width="1.500"/></svg></button>
    <button class="tray d-flex align-items-center justify-content-center" aria-label="OneNote"><svg class="ic" viewBox="0 0 20 20"><path d="M5 1h15v18H5z" fill="#ca64ea"/><path d="M15 7h5v6h-5z" fill="#ae4bd5"/><path d="M15 13h5v6h-5z" fill="#7719aa"/><path d="M0 4h12v12H0z" fill="#6b179e"/><path d="M4 13V7l4 6V7" stroke="#fff" stroke-width="1.500" fill="none"/></svg></button>
    <button class="tray d-flex align-items-center justify-content-center" aria-label="Network"><svg class="ic" viewBox="0 0 20 20" fill="none" stroke="#111" stroke-width="1.200"><path d="M6 2.500h13.400v11H5V8M12 14v3.500M8 17.500h8M.6 2.500H5V7H.6zM3 7v3"/></svg></button>
    <button class="tray d-flex align-items-center justify-content-center" aria-label="Battery"><svg class="ic" viewBox="0 0 20 20"><path d="M5 5.500h13.500v9H5z" fill="none" stroke="#111"/><path d="M7 7h3v6H7zM10.500 7h3v6h-3zM14 7h3v6h-3zM19 8.500h1v3h-1z"/><path d="M1 4h5v4H1zM2 2v2M5 2v2M3 8v5h3" fill="#eee" stroke="#111"/></svg></button>
    <button class="tray d-flex align-items-center justify-content-center" aria-label="Muted"><svg class="ic" viewBox="0 0 20 20" fill="none" stroke="#111" stroke-width="1.200"><path d="M1 7h3l4-4v14l-4-4H1zM12 7l6 6M18 7l-6 6"/></svg></button>
    <button class="wide d-flex align-items-center justify-content-center" aria-label="Touch keyboard"><svg width="30" height="20" viewBox="0 0 30 20"><path d="M1 2h28v15H1z" fill="none" stroke="#111" stroke-width="1.300"/><path d="M4 6.500h23M4 9.500h23" stroke="#111" stroke-dasharray="1 2"/><path d="M8 13.500h14" stroke="#111"/></svg></button>
    <button class="tray d-flex align-items-center justify-content-center" aria-label="Input language"><svg class="ic" viewBox="0 0 20 20" fill="none" stroke="#555"><path d="M2 4h7V1h3v3h7v9h-7v6H9v-6H2zM5 7h4v3H5zM12 7h4v3h-4z"/></svg></button>
    <button class="wide d-flex align-items-center justify-content-center" aria-label="Sogou"><svg class="ic" viewBox="0 0 36 36"><path d="M4 5L27 1q3 0 4 3l4 22q0 3-3 4L10 34q-3 0-4-3L1 9q0-3 3-4z" fill="#f4511e"/><path d="M28 9Q10 7 9 13t11 5q9 1 7 6T9 26" fill="none" stroke="#fff" stroke-width="5"/></svg></button>
    <button class="clock ms-2">14:22</button>
    <button class="d-flex align-items-center justify-content-center" aria-label="Notifications"><svg class="ic" viewBox="0 0 20 20"><path d="M.7 1h18.600v14H13l-3 3-3-3H.7z" fill="none" stroke="#111" stroke-width="1.300"/></svg></button>
  </div>
  <span class="watermark">https://blog.csdn.net/weixin_50632459</span>
</div>
</body>
</html>
